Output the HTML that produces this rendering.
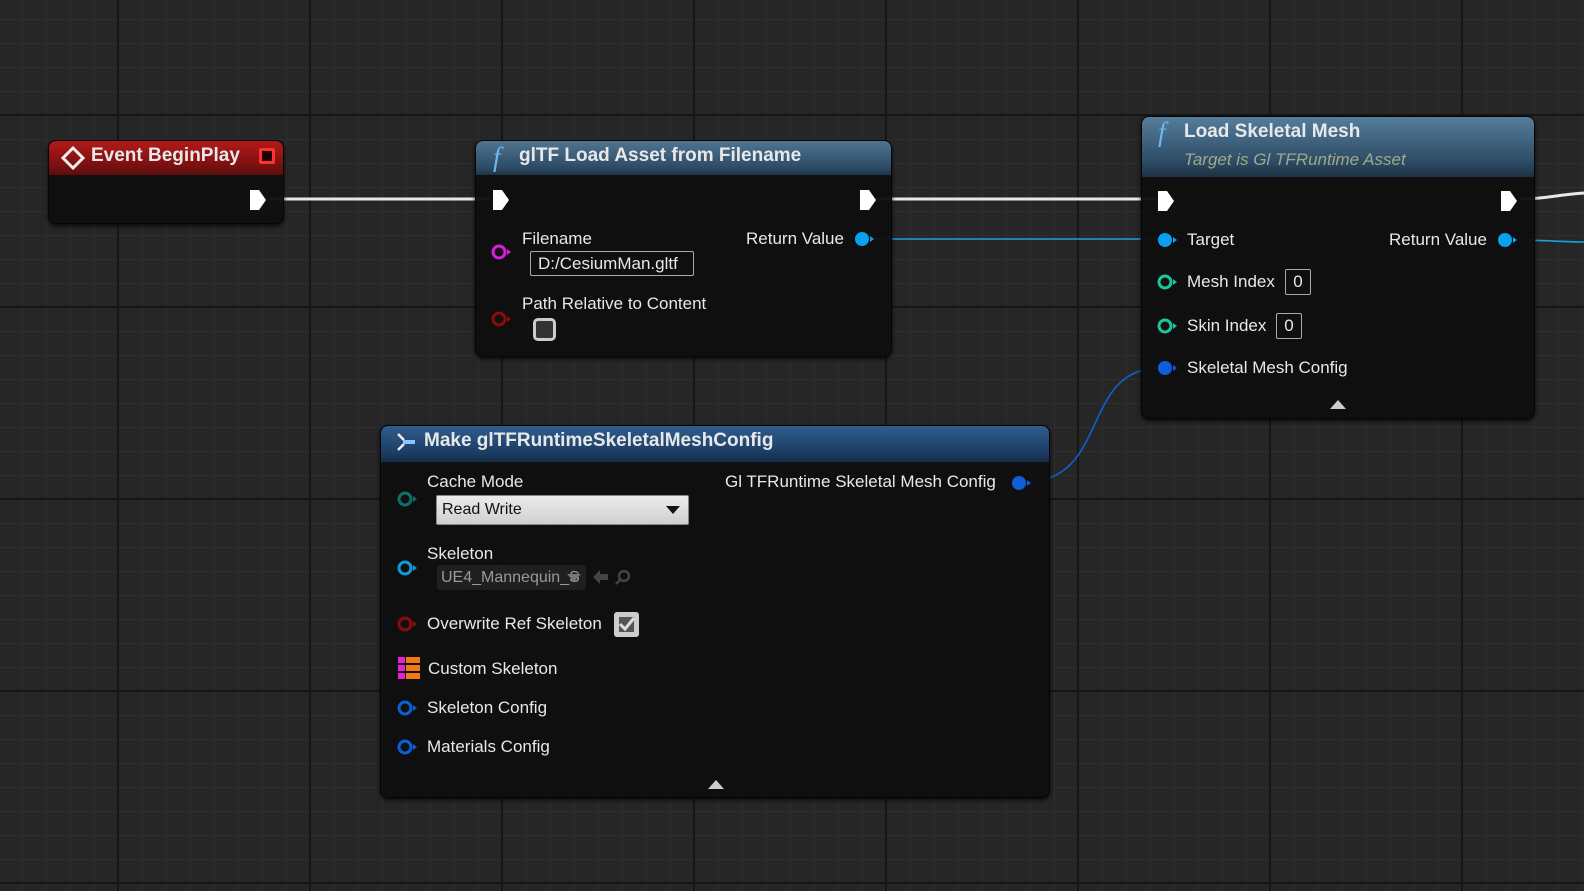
<!DOCTYPE html>
<html><head><meta charset="utf-8"><style>
*{margin:0;padding:0;box-sizing:border-box}
body{width:1584px;height:891px;overflow:hidden;position:relative;font-family:"Liberation Sans",sans-serif;color:#e6e6e6;
background-color:#262626;
background-image:
linear-gradient(to right,#161616 2px,transparent 2px),
linear-gradient(to bottom,#161616 2px,transparent 2px),
linear-gradient(to right,#2f2f2f 1px,transparent 1px),
linear-gradient(to bottom,#2f2f2f 1px,transparent 1px);
background-size:192px 192px,192px 192px,24px 24px,24px 24px;
background-position:117px 0,0 114px,22px 0,0 19px;}
.node{position:absolute;background:rgba(14,15,14,0.96);border-radius:8px;box-shadow:0 2px 4px rgba(0,0,0,.8);border:1px solid #050505;overflow:hidden}
.hdr{position:absolute;left:0;top:0;right:0;font-weight:bold;font-size:19px;color:#f0f0f0}
.t{position:absolute;font-size:17px;line-height:20px;white-space:nowrap;color:#e8e8e8}
svg.p{position:absolute}
</style></head><body>

<svg width="1584" height="891" style="position:absolute;left:0;top:0">
<g fill="none">
<path d="M270 199 H490" stroke="#e8e8e8" stroke-width="3"/>
<path d="M875 199 H1160" stroke="#e8e8e8" stroke-width="3"/>
<path d="M1520 199 C1545 199 1555 195 1584 193" stroke="#e8e8e8" stroke-width="3"/>
<path d="M870 239 H1160" stroke="#1aa0e0" stroke-width="1.6"/>
<path d="M1515 240 C1545 240 1560 242 1584 242" stroke="#1aa0e0" stroke-width="1.6"/>
<path d="M1025 482 C1110 482 1080 368 1160 368" stroke="#1060d0" stroke-width="1.6"/>
</g></svg>

<!-- Event BeginPlay -->
<div class="node" style="left:48px;top:140px;width:236px;height:84px">
 <div class="hdr" style="height:34px;background:linear-gradient(#b21a1a,#7c1010 70%,#5a0e0e)"></div>
</div>
<svg class="p" style="left:61px;top:146px" width="24" height="24"><path d="M12 2 L22 12 L12 22 L2 12Z" fill="none" stroke="#eee" stroke-width="3"/></svg>
<div class="t" style="left:91px;top:146px;font-weight:bold;font-size:19px">Event BeginPlay</div>
<div style="position:absolute;left:259px;top:148px;width:16px;height:16px;border:3px solid #ff3030;background:#200;border-radius:2px"></div>
<svg class="p" style="left:249px;top:189px" width="20" height="22"><path d="M1 1 H10 L17 11 L10 21 H1Z" fill="#fff"/></svg>

<!-- glTF Load -->
<div class="node" style="left:475px;top:140px;width:417px;height:217px">
 <div class="hdr" style="height:34px;background:linear-gradient(#4f7592,#2c4a64 80%,#1f3346)"></div>
</div>
<div class="t" style="left:493px;top:142px;font-family:'Liberation Serif',serif;font-style:italic;font-size:27px;color:#6cb8f0;line-height:30px">f</div>
<div class="t" style="left:519px;top:146px;font-weight:bold;font-size:19px">glTF Load Asset from Filename</div>
<svg class="p" style="left:492px;top:189px" width="20" height="22"><path d="M1 1 H10 L17 11 L10 21 H1Z" fill="#fff"/></svg>
<svg class="p" style="left:859px;top:189px" width="20" height="22"><path d="M1 1 H10 L17 11 L10 21 H1Z" fill="#fff"/></svg>
<svg class="p" style="left:490px;top:244px" width="24" height="16"><circle cx="9" cy="8" r="6" fill="#111" stroke="#d81ed8" stroke-width="3"/><path d="M17 5 L21 8 L17 11Z" fill="#d81ed8"/></svg>
<div class="t" style="left:522px;top:229px">Filename</div>
<div class="t" style="left:530px;top:251px;width:164px;height:25px;border:1px solid #aaa;border-radius:2px;padding-left:7px;line-height:23px">D:/CesiumMan.gltf</div>
<div class="t" style="left:746px;top:229px">Return Value</div>
<svg class="p" style="left:853px;top:231px" width="24" height="16"><circle cx="9" cy="8" r="7" fill="#0aa0f0"/><path d="M17 5 L21 8 L17 11Z" fill="#0aa0f0"/></svg>
<svg class="p" style="left:490px;top:311px" width="24" height="16"><circle cx="9" cy="8" r="6" fill="#111" stroke="#8a0c0c" stroke-width="3"/><path d="M17 5 L21 8 L17 11Z" fill="#8a0c0c"/></svg>
<div class="t" style="left:522px;top:294px">Path Relative to Content</div>
<div style="position:absolute;left:533px;top:318px;width:23px;height:23px;border:3px solid #ccc;border-radius:5px;background:#333"></div>

<!-- Load Skeletal Mesh -->
<div class="node" style="left:1141px;top:116px;width:394px;height:303px">
 <div class="hdr" style="height:60px;background:linear-gradient(#557d9c,#2d4b64 75%,#1d3143)"></div>
</div>
<div class="t" style="left:1158px;top:117px;font-family:'Liberation Serif',serif;font-style:italic;font-size:27px;color:#6cb8f0;line-height:30px">f</div>
<div class="t" style="left:1184px;top:122px;font-weight:bold;font-size:19px">Load Skeletal Mesh</div>
<div class="t" style="left:1184px;top:150px;font-style:italic;color:#a0a88c">Target is Gl TFRuntime Asset</div>
<svg class="p" style="left:1157px;top:190px" width="20" height="22"><path d="M1 1 H10 L17 11 L10 21 H1Z" fill="#fff"/></svg>
<svg class="p" style="left:1500px;top:190px" width="20" height="22"><path d="M1 1 H10 L17 11 L10 21 H1Z" fill="#fff"/></svg>
<svg class="p" style="left:1156px;top:232px" width="24" height="16"><circle cx="9" cy="8" r="7" fill="#0aa0f0"/><path d="M17 5 L21 8 L17 11Z" fill="#0aa0f0"/></svg>
<div class="t" style="left:1187px;top:230px">Target</div>
<div class="t" style="left:1389px;top:230px">Return Value</div>
<svg class="p" style="left:1496px;top:232px" width="24" height="16"><circle cx="9" cy="8" r="7" fill="#0aa0f0"/><path d="M17 5 L21 8 L17 11Z" fill="#0aa0f0"/></svg>
<svg class="p" style="left:1156px;top:274px" width="24" height="16"><circle cx="9" cy="8" r="6" fill="#111" stroke="#1ec39a" stroke-width="3"/><path d="M17 5 L21 8 L17 11Z" fill="#1ec39a"/></svg>
<div class="t" style="left:1187px;top:272px">Mesh Index</div>
<div class="t" style="left:1285px;top:269px;width:26px;height:26px;border:1px solid #aaa;border-radius:2px;text-align:center;line-height:24px">0</div>
<svg class="p" style="left:1156px;top:318px" width="24" height="16"><circle cx="9" cy="8" r="6" fill="#111" stroke="#1ec39a" stroke-width="3"/><path d="M17 5 L21 8 L17 11Z" fill="#1ec39a"/></svg>
<div class="t" style="left:1187px;top:316px">Skin Index</div>
<div class="t" style="left:1276px;top:313px;width:26px;height:26px;border:1px solid #aaa;border-radius:2px;text-align:center;line-height:24px">0</div>
<svg class="p" style="left:1156px;top:360px" width="24" height="16"><circle cx="9" cy="8" r="7" fill="#0d5ed8"/><path d="M17 5 L21 8 L17 11Z" fill="#0d5ed8"/></svg>
<div class="t" style="left:1187px;top:358px">Skeletal Mesh Config</div>
<svg class="p" style="left:1329px;top:398px" width="18" height="12"><path d="M1 11 L9 2 L17 11Z" fill="#ccc"/></svg>

<!-- Make config -->
<div class="node" style="left:380px;top:425px;width:670px;height:373px">
 <div class="hdr" style="height:36px;background:linear-gradient(#2f5d8c,#1d3f66 70%,#142c48)"></div>
</div>
<svg class="p" style="left:395px;top:431px" width="22" height="22"><path d="M3 3 L9 9 M3 19 L9 13" stroke="#eee" stroke-width="2.5"/><rect x="8" y="9" width="12" height="4" fill="#8cc4ff"/></svg>
<div class="t" style="left:424px;top:431px;font-weight:bold;font-size:19px">Make glTFRuntimeSkeletalMeshConfig</div>
<svg class="p" style="left:396px;top:491px" width="24" height="16"><circle cx="9" cy="8" r="6" fill="#111" stroke="#0e7068" stroke-width="3"/><path d="M17 5 L21 8 L17 11Z" fill="#0e7068"/></svg>
<div class="t" style="left:427px;top:472px">Cache Mode</div>
<div class="t" style="left:436px;top:495px;width:253px;height:30px;background:linear-gradient(#ececec,#cfcfcf);border:1px solid #888;border-radius:2px;color:#111;padding-left:5px;line-height:28px;font-size:16px">Read Write</div>
<svg class="p" style="left:666px;top:506px" width="14" height="8"><path d="M0 0 H14 L7 8Z" fill="#111"/></svg>
<div class="t" style="left:725px;top:472px">Gl TFRuntime Skeletal Mesh Config</div>
<svg class="p" style="left:1010px;top:475px" width="24" height="16"><circle cx="9" cy="8" r="7" fill="#0d5ed8"/><path d="M17 5 L21 8 L17 11Z" fill="#0d5ed8"/></svg>
<svg class="p" style="left:396px;top:560px" width="24" height="16"><circle cx="9" cy="8" r="6" fill="#111" stroke="#129ad8" stroke-width="3"/><path d="M17 5 L21 8 L17 11Z" fill="#129ad8"/></svg>
<div class="t" style="left:427px;top:544px">Skeleton</div>
<div class="t" style="left:437px;top:565px;width:149px;height:25px;background:#1e1f1e;border-radius:3px;color:#9a9a9a;padding-left:4px;line-height:25px;font-size:16px;overflow:hidden">UE4_Mannequin_S</div>
<svg class="p" style="left:567px;top:574px" width="14" height="8"><path d="M0 0 H14 L7 8Z" fill="#777"/></svg>
<svg class="p" style="left:592px;top:569px" width="40" height="16"><path d="M1 8 L8 1 V5 H16 V11 H8 V15Z" fill="#444"/><circle cx="32" cy="7" r="5" fill="none" stroke="#444" stroke-width="2.5"/><path d="M28 11 L24 15" stroke="#444" stroke-width="2.5"/></svg>
<svg class="p" style="left:396px;top:616px" width="24" height="16"><circle cx="9" cy="8" r="6" fill="#111" stroke="#8a0c0c" stroke-width="3"/><path d="M17 5 L21 8 L17 11Z" fill="#8a0c0c"/></svg>
<div class="t" style="left:427px;top:614px">Overwrite Ref Skeleton</div>
<div style="position:absolute;left:614px;top:612px;width:25px;height:25px;background:#ccc;border-radius:3px"></div>
<svg class="p" style="left:617px;top:615px" width="19" height="19"><rect x="2" y="2" width="15" height="15" fill="#555"/><path d="M3 9 L8 14 L17 3" stroke="#ddd" stroke-width="3" fill="none"/></svg>
<div style="position:absolute;left:398px;top:657px;width:7px;height:22px;background:repeating-linear-gradient(#e81ed8 0 6px,#111 6px 8px)"></div>
<div style="position:absolute;left:406px;top:657px;width:14px;height:22px;background:repeating-linear-gradient(#f07a10 0 6px,#111 6px 8px)"></div>
<div class="t" style="left:428px;top:659px">Custom Skeleton</div>
<svg class="p" style="left:396px;top:700px" width="24" height="16"><circle cx="9" cy="8" r="6" fill="#111" stroke="#0d5ed8" stroke-width="3"/><path d="M17 5 L21 8 L17 11Z" fill="#0d5ed8"/></svg>
<div class="t" style="left:427px;top:698px">Skeleton Config</div>
<svg class="p" style="left:396px;top:739px" width="24" height="16"><circle cx="9" cy="8" r="6" fill="#111" stroke="#0d5ed8" stroke-width="3"/><path d="M17 5 L21 8 L17 11Z" fill="#0d5ed8"/></svg>
<div class="t" style="left:427px;top:737px">Materials Config</div>
<svg class="p" style="left:707px;top:778px" width="18" height="12"><path d="M1 11 L9 2 L17 11Z" fill="#ccc"/></svg>
</body></html>
